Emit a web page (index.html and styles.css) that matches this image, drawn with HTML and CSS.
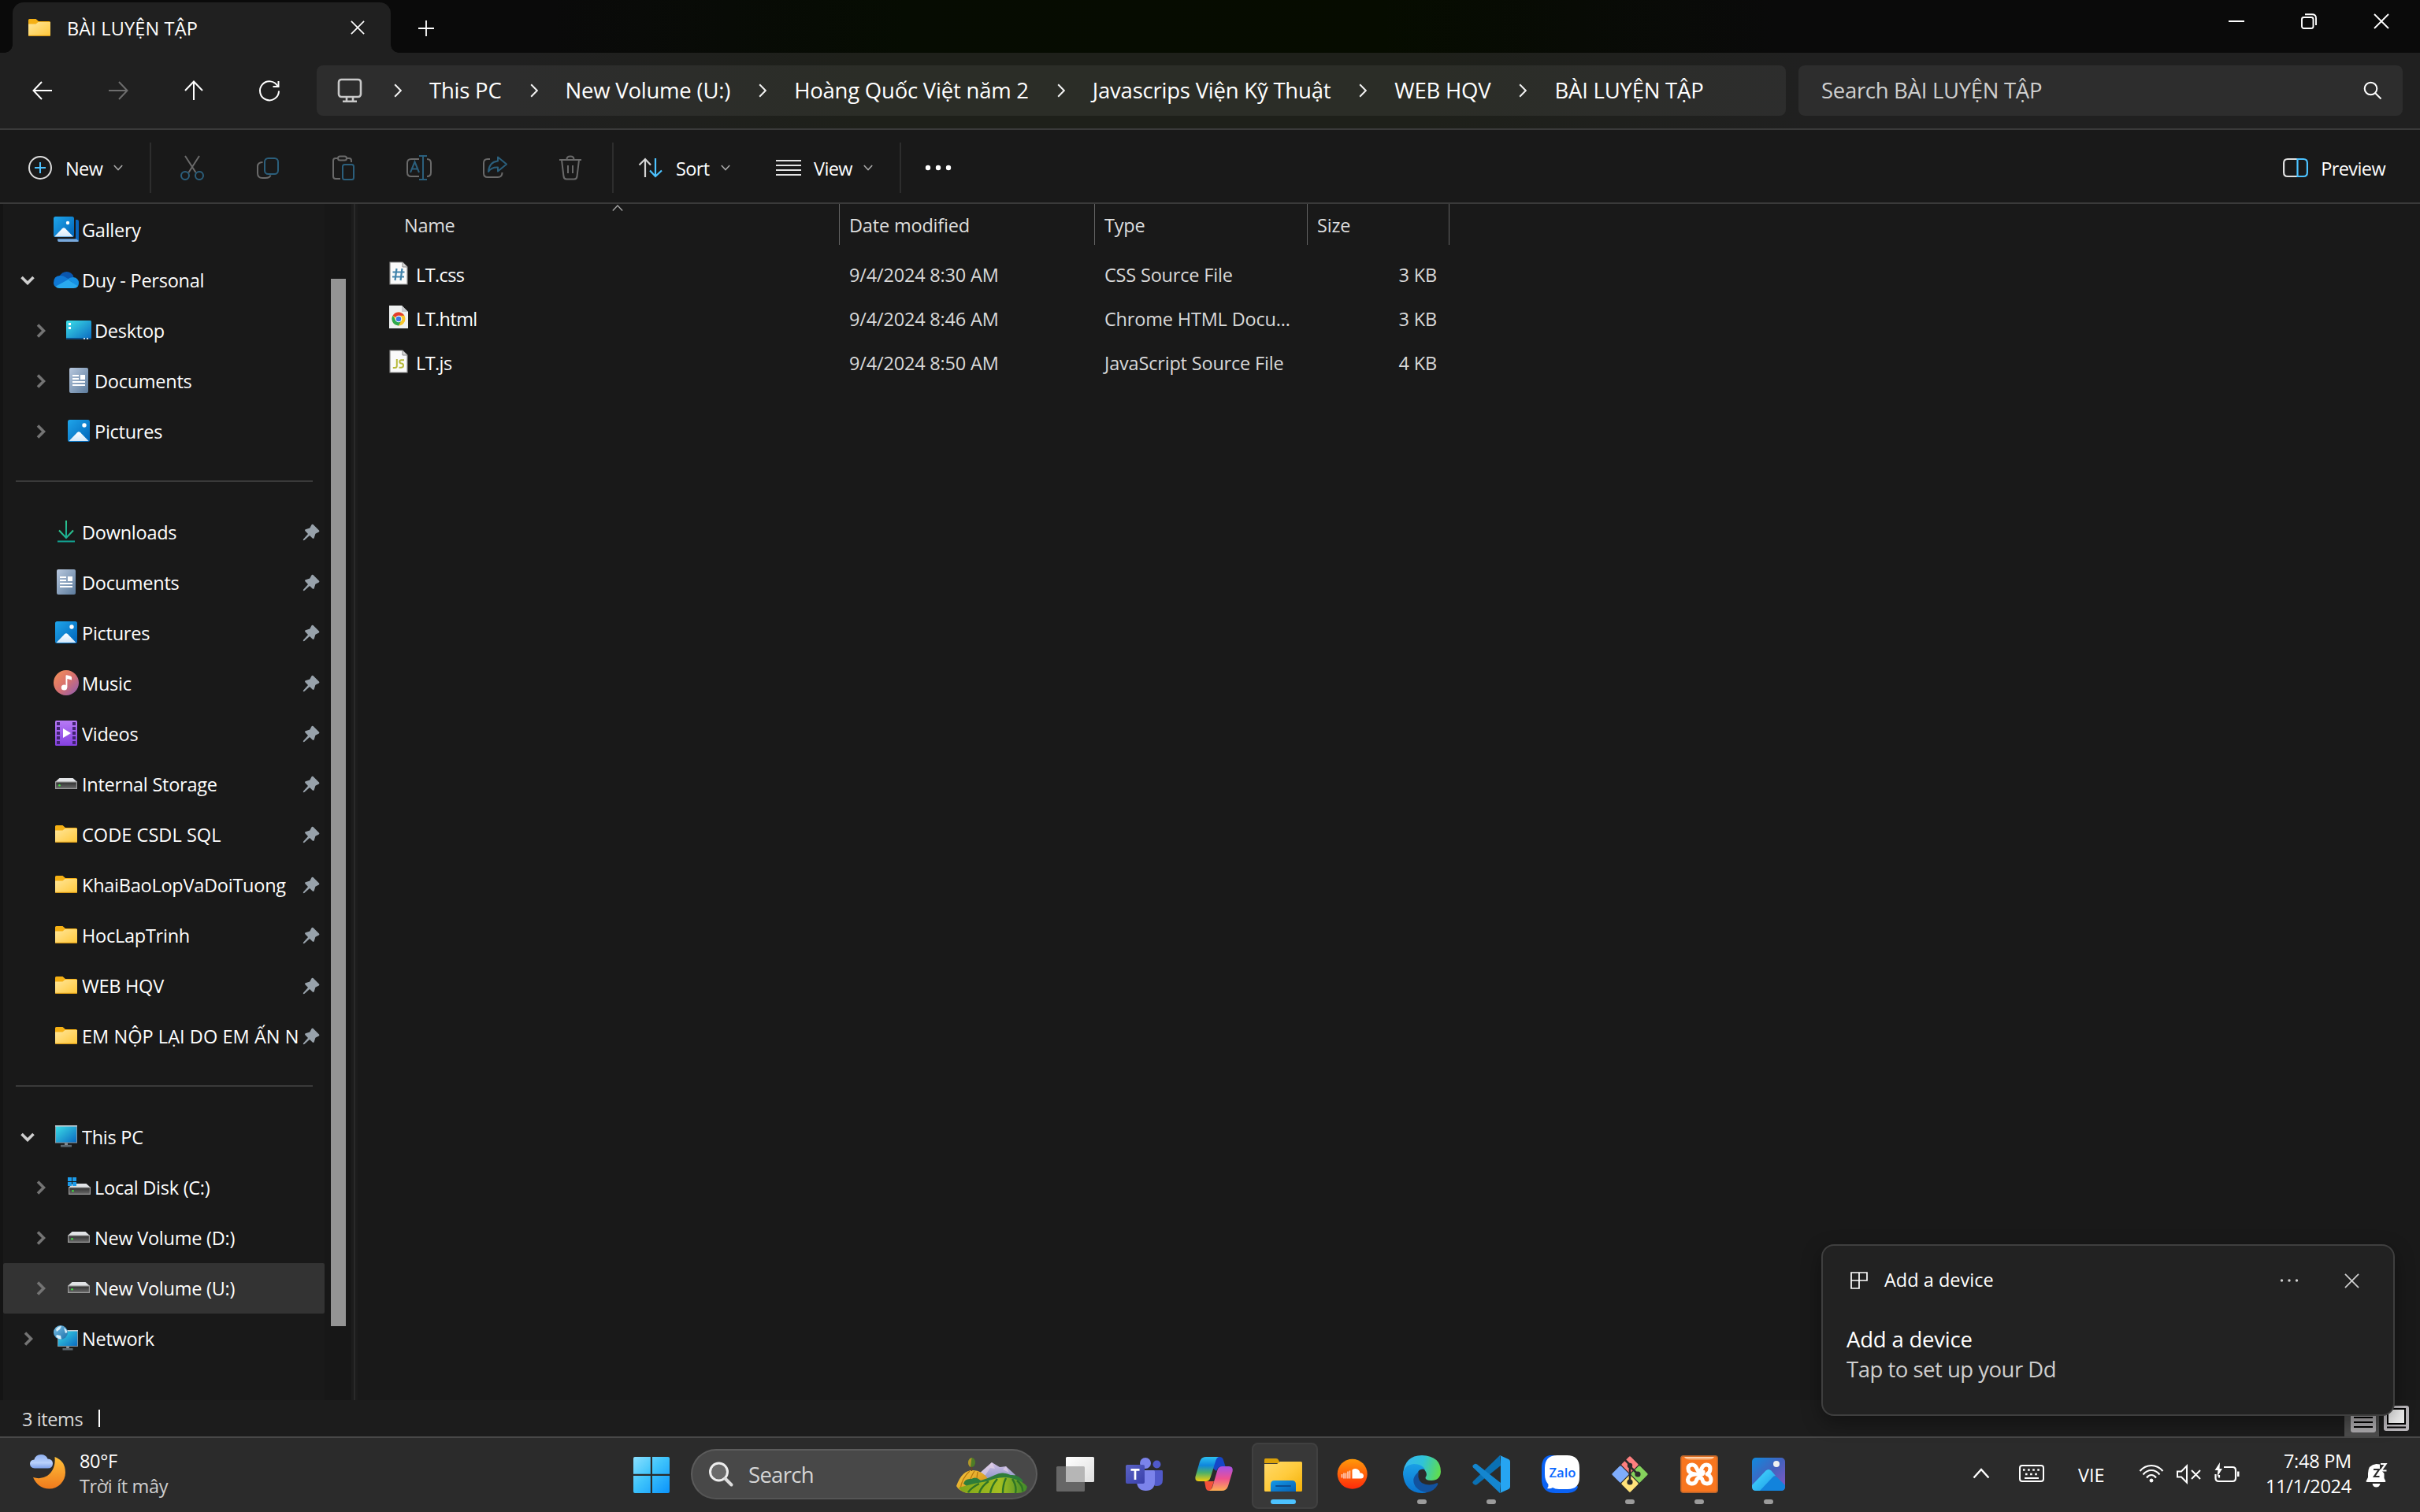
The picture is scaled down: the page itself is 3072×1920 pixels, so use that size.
FILE: index.html
```html
<!DOCTYPE html>
<html lang="vi">
<head>
<meta charset="utf-8">
<title>BÀI LUYỆN TẬP</title>
<link rel="stylesheet" href="styles.css">
</head>
<body>
<svg class="defs" aria-hidden="true">
  <defs>
    <linearGradient id="gFolder" x1="0" y1="0" x2="1" y2="1"><stop offset="0" stop-color="#ffe69a"/><stop offset="1" stop-color="#ffc83a"/></linearGradient>
    <linearGradient id="gPic" x1="0" y1="0" x2="1" y2="1"><stop offset="0" stop-color="#1fa5ea"/><stop offset="1" stop-color="#0063b8"/></linearGradient>
    <linearGradient id="gSnow" x1="0" y1="0" x2="0" y2="1"><stop offset="0" stop-color="#ffffff"/><stop offset="1" stop-color="#d3e8fa"/></linearGradient>
    <linearGradient id="gDesk" x1="0" y1="0" x2="1" y2="1"><stop offset="0" stop-color="#3de0e8"/><stop offset="1" stop-color="#0a68c0"/></linearGradient>
    <linearGradient id="gDoc" x1="0" y1="0" x2="1" y2="1"><stop offset="0" stop-color="#b8c8de"/><stop offset="1" stop-color="#5c7b9c"/></linearGradient>
    <linearGradient id="gMusic" x1="0" y1="0" x2="1" y2="1"><stop offset="0" stop-color="#f59256"/><stop offset=".5" stop-color="#d8716f"/><stop offset="1" stop-color="#8a5bb5"/></linearGradient>
    <linearGradient id="gVideo" x1="0" y1="0" x2="0" y2="1"><stop offset="0" stop-color="#b77af5"/><stop offset="1" stop-color="#8440e0"/></linearGradient>
    <linearGradient id="gDown" x1="0" y1="0" x2="0" y2="1"><stop offset="0" stop-color="#2fc48d"/><stop offset="1" stop-color="#12a594"/></linearGradient>
    <linearGradient id="gDrive" x1="0" y1="0" x2="0" y2="1"><stop offset="0" stop-color="#2f2f2f"/><stop offset="1" stop-color="#6a6a6a"/></linearGradient>
    <linearGradient id="gGlobe" x1="0" y1="0" x2="1" y2="1"><stop offset="0" stop-color="#7cc3ea"/><stop offset="1" stop-color="#1a6ea8"/></linearGradient>

    <symbol id="folder" viewBox="0 0 28 22"><path d="M0 1.5Q0 0 1.500 0H9.500L13 3H26.500Q28 3 28 4.500V10H0Z" fill="#f5b014"/><path d="M0 6.500H9.500L12.500 4H28V20.500Q28 22 26.500 22H1.500Q0 22 0 20.500Z" fill="url(#gFolder)"/><path d="M.5 21.400H27.500" stroke="#d99a17" stroke-width="1.200"/></symbol>
    <symbol id="picture" viewBox="0 0 28 28"><rect width="28" height="28" rx="2.500" fill="url(#gPic)"/><path d="M1.500 27L12 16.200Q14 14.300 16 16.200L26.500 27Z" fill="url(#gSnow)"/><circle cx="21" cy="7" r="2.700" fill="#fff"/></symbol>
    <symbol id="document" viewBox="0 0 24 32"><rect width="24" height="32" rx="2" fill="url(#gDoc)"/><path d="M4 10H12M4 14H12M4 18H20M4 22H20" stroke="#fff" stroke-width="2"/><rect x="14" y="9" width="6" height="6" fill="#fff"/></symbol>
    <symbol id="drive" viewBox="0 0 28 14"><path d="M5.500 0H22.500L28 5H0Z" fill="#e1e3e6"/><rect x=".6" y="5" width="26.800" height="8.400" fill="url(#gDrive)" stroke="#9a9a9a" stroke-width="1.200"/><circle cx="5.500" cy="9.300" r="1.300" fill="#3fe03f"/></symbol>
    <symbol id="monitor" viewBox="0 0 28 28"><rect x=".5" y=".5" width="27" height="21.500" fill="url(#gDesk)" stroke="#8b9aa5"/><path d="M0 .8H28" stroke="#c5cdd4" stroke-width="1.600"/><path d="M12 22.500H16V25H12Z" fill="#8c949b"/><path d="M7 24.800H21V27.500H7Z" fill="#5d6870"/></symbol>
    <symbol id="pin" viewBox="0 0 22 22"><path d="M13.500 1Q12 .2 11.300 1.700L9.300 5.600L3.800 7.300Q2.400 8 3.400 9.300L7 12.900L1 19.700L.8 21.200L2.300 21L9.100 15L12.700 18.600Q14 19.600 14.700 18.200L16.400 12.700L20.800 10.400Q22 9.600 21 8.500Z" fill="#98a2ab"/></symbol>
    <symbol id="chev-right" viewBox="0 0 12 18"><path d="M2 1.500L9.500 9L2 16.500" fill="none" stroke="#747474" stroke-width="3.600"/></symbol>
    <symbol id="chev-down" viewBox="0 0 18 12"><path d="M1.500 2L9 9.500L16.500 2" fill="none" stroke="#cfcfcf" stroke-width="3.600"/></symbol>
    <symbol id="crumb" viewBox="0 0 10 18"><path d="M1.200 1.200L8.800 9L1.200 16.800" fill="none" stroke="#f2f2f2" stroke-width="2"/></symbol>
    <symbol id="caret" viewBox="0 0 12 8"><path d="M.8 1L6 6.500L11.200 1" fill="none" stroke="#a8a8a8" stroke-width="1.600"/></symbol>
    <symbol id="close" viewBox="0 0 20 20"><path d="M1 1L19 19M19 1L1 19" fill="none" stroke="currentColor" stroke-width="1.800"/></symbol>
  </defs>
</svg>

<div class="screen">
  <header class="titlebar">
    <div class="tab">
      <svg class="tab-folder"><use href="#folder"/></svg>
      <span class="tab-title">BÀI LUYỆN TẬP</span>
      <svg class="tab-close"><use href="#close"/></svg>
    </div>
    <svg class="tab-new" viewBox="0 0 20 20"><path d="M10 0V20M0 10H20" stroke="#fff" stroke-width="1.800"/></svg>
    <div class="window-controls">
      <svg viewBox="0 0 20 20"><path d="M0 10H20" stroke="#fff" stroke-width="2"/></svg>
      <svg viewBox="0 0 20 20" fill="none" stroke="#fff" stroke-width="1.900"><rect x="1" y="5" width="14.500" height="14" rx="2.500"/><path d="M5 1.300H14Q19 1.300 19 6.300V15"/></svg>
      <svg><use href="#close"/></svg>
    </div>
  </header>

  <nav class="navbar">
    <div class="nav-buttons">
      <svg viewBox="0 0 28 28"><path d="M26 14H3M13 3L2.500 14L13 25" stroke="#fff"/></svg>
      <svg viewBox="0 0 28 28"><path d="M2 14H25M15 3L25.500 14L15 25" stroke="#6d6d6d"/></svg>
      <svg viewBox="0 0 28 28"><path d="M14 26V3M3 14L14 2.500L25 14" stroke="#fff"/></svg>
      <svg viewBox="0 0 28 28"><path d="M24.500 8.500A12 12 0 1 0 26 14.500M25.500 2V9H18.500" stroke="#fff"/></svg>
    </div>
    <div class="address">
      <svg class="address-pc" viewBox="0 0 32 32" fill="none" stroke="#c9c9c9" stroke-width="2.600"><rect x="2" y="2" width="28" height="22" rx="3.500"/><path d="M12 24V29M20 24V29M7 29.700H25"/></svg>
      <svg class="crumb"><use href="#crumb"/></svg><span>This PC</span>
      <svg class="crumb"><use href="#crumb"/></svg><span>New Volume (U:)</span>
      <svg class="crumb"><use href="#crumb"/></svg><span>Hoàng Quốc Việt năm 2</span>
      <svg class="crumb"><use href="#crumb"/></svg><span>Javascrips Viện Kỹ Thuật</span>
      <svg class="crumb"><use href="#crumb"/></svg><span>WEB HQV</span>
      <svg class="crumb"><use href="#crumb"/></svg><span>BÀI LUYỆN TẬP</span>
    </div>
    <div class="search">
      <span>Search BÀI LUYỆN TẬP</span>
      <svg viewBox="0 0 24 24" fill="none" stroke="#fff" stroke-width="2"><circle cx="9.500" cy="9.500" r="7.800"/><path d="M15 15L22.500 22.500"/></svg>
    </div>
  </nav>

  <div class="toolbar">
    <div class="tool tool-new">
      <svg class="i32" viewBox="0 0 32 32" fill="none" stroke-width="2"><circle cx="16" cy="16" r="14" stroke="#dcdcdc"/><path d="M16 9V23M9 16H23" stroke="#4cc2ff"/></svg>
      <span>New</span><svg class="caret"><use href="#caret"/></svg>
    </div>
    <i class="divider"></i>
    <div class="tool-icons">
      <svg viewBox="0 0 32 32"><path d="M7 1L20.500 22M25 1L11.500 22" stroke="#6a6a6a"/><circle cx="7" cy="26" r="5" stroke="#2b5f7c"/><circle cx="25" cy="26" r="5" stroke="#2b5f7c"/></svg>
      <svg viewBox="0 0 32 32"><path d="M9.500 9Q3 9 3 14.500V23Q3 29 9 29H13Q18.500 29 19.500 25.500" stroke="#6a6a6a"/><rect x="12" y="4" width="17" height="20" rx="4.500" stroke="#2b5f7c"/></svg>
      <svg viewBox="0 0 32 32"><path d="M9 4H6Q3 4 3 7V27Q3 30 6 30H12M20 4H23Q26 4 26 7V9" stroke="#6a6a6a"/><rect x="9" y="1.500" width="11" height="5" rx="2.500" stroke="#6a6a6a"/><rect x="15" y="12" width="14" height="19" rx="2.500" stroke="#2b5f7c"/></svg>
      <svg viewBox="0 0 32 32"><path d="M16 5H6Q1 5 1 10V22Q1 27 6 27H16M26 5Q31 5 31 10V22Q31 27 26 27" stroke="#6a6a6a"/><path d="M5 22L10.500 8.500L16 22M7 17.500H14M21 1V31M16 1H26M16 31H26" stroke="#2b5f7c"/></svg>
      <svg viewBox="0 0 32 32"><path d="M10 5H7Q2 5 2 10V23Q2 28 7 28H20Q25.500 28 25.500 22" stroke="#6a6a6a"/><path d="M20 2.500L31 11.500L20 20.500V15.500Q12 15 8 21Q9 8.500 20 7.500Z" stroke="#2b5f7c" stroke-linejoin="round"/></svg>
      <svg viewBox="0 0 32 32"><path d="M2 6H30M5 6L7.500 27Q8 30.500 11 30.500H21Q24 30.500 24.500 27L27 6M11.500 5.500Q11.500 1.500 16 1.500Q20.500 1.500 20.500 5.500M13 13V23M19 13V23" stroke="#6a6a6a"/></svg>
    </div>
    <i class="divider"></i>
    <div class="tool tool-sort">
      <svg class="i32" viewBox="0 0 32 32" fill="none" stroke-width="2.200"><path d="M9 28V5M1.500 12.500L9 5L16 12.500" stroke="#d5d5d5"/><path d="M22 4V27M15 19.500L22 27L30 19.500" stroke="#4cc2ff"/></svg>
      <span>Sort</span><svg class="caret"><use href="#caret"/></svg>
    </div>
    <div class="tool tool-view">
      <svg class="i32" viewBox="0 0 32 32" stroke="#e3e3e3" stroke-width="2"><path d="M0 7H32M0 13H32M0 19H32M0 25H32"/></svg>
      <span>View</span><svg class="caret"><use href="#caret"/></svg>
    </div>
    <i class="divider"></i>
    <svg class="more" viewBox="0 0 34 8" fill="#fff"><circle cx="4" cy="4" r="3.200"/><circle cx="17" cy="4" r="3.200"/><circle cx="30" cy="4" r="3.200"/></svg>
    <div class="tool tool-preview">
      <svg class="i32" viewBox="0 0 32 32" fill="none" stroke-width="2.200"><path d="M18 5H6Q1.100 5 1.100 10V22Q1.100 27 6 27H18" stroke="#e0e0e0"/><path d="M18.500 5H26Q30.900 5 30.900 10V22Q30.900 27 26 27H18.500Z" stroke="#4cc2ff"/></svg>
      <span>Preview</span>
    </div>
  </div>

  <div class="content">
    <aside class="sidebar">
      <ul class="tree">
        <li><b></b><i><svg width="32" height="32" viewBox="0 0 32 32"><path d="M28 4H30Q32 4 32 6V30Q32 32 30 32H7Q5 32 5 28.500H28Z" fill="#0a66bd"/><path d="M5 28.500H29L32 31Q31.500 32 30 32H7Q5 32 5 28.500Z" fill="#79a9dc"/><rect width="27.500" height="27.500" rx="2.500" fill="#191919"/><rect width="26" height="26" rx="2.500" fill="url(#gPic)"/><path d="M1 25.500L11 15.200Q13 13.500 15 15.200L25 25.500Z" fill="url(#gSnow)"/><circle cx="18" cy="8" r="2.200" fill="#fff"/></svg></i><span>Gallery</span></li>
        <li><b><svg class="cd"><use href="#chev-down"/></svg></b><i><svg width="32" height="21" viewBox="0 0 32 21"><path d="M7 6Q11 0 16.500 0Q23 0 25.500 6.500L16 12Z" fill="#0a56ae"/><path d="M0 14Q0 5.500 8 5Q12 4.500 15 7L22 11L3 19.500Q0 17.500 0 14Z" fill="#0f78d4"/><path d="M18 9.500Q21 6.800 25 7Q32 8 32 14.500Q32 17 30.500 19Z" fill="#1590e2"/><path d="M2.500 18.800L18.500 10L31 18.500Q29 21 25.500 21H7Q4 21 2.500 18.800Z" fill="#29a9ee"/></svg></i><span>Duy - Personal</span></li>
        <li class="sub"><b><svg class="cr"><use href="#chev-right"/></svg></b><i><svg width="32" height="24" viewBox="0 0 32 24"><rect width="32" height="24" rx="1.500" fill="url(#gDesk)"/><path d="M0 22H32V22.500Q32 24 30.500 24H1.500Q0 24 0 22.500Z" fill="#0b4f86"/><path d="M3 3H6V6H3ZM3 8H6V11H3Z" fill="#fff"/><path d="M22 22H24V24H22ZM26 22H28V24H26Z" fill="#c9dcec"/></svg></i><span>Desktop</span></li>
        <li class="sub"><b><svg class="cr"><use href="#chev-right"/></svg></b><i><svg width="24" height="32"><use href="#document"/></svg></i><span>Documents</span></li>
        <li class="sub"><b><svg class="cr"><use href="#chev-right"/></svg></b><i><svg width="28" height="28"><use href="#picture"/></svg></i><span>Pictures</span></li>
        <li class="rule"></li>
        <li><b></b><i><svg width="22" height="28" viewBox="0 0 22 28" fill="none" stroke="url(#gDown)" stroke-width="2"><path d="M10 0H12V22H10Z" fill="url(#gDown)" stroke="none"/><path d="M2 12.500L11 22L20 12.500M0 26.500L22 26.400"/></svg></i><span>Downloads</span><svg class="pin"><use href="#pin"/></svg></li>
        <li><b></b><i><svg width="24" height="32"><use href="#document"/></svg></i><span>Documents</span><svg class="pin"><use href="#pin"/></svg></li>
        <li><b></b><i><svg width="28" height="28"><use href="#picture"/></svg></i><span>Pictures</span><svg class="pin"><use href="#pin"/></svg></li>
        <li><b></b><i><svg width="32" height="32" viewBox="0 0 32 32"><circle cx="16" cy="16" r="16" fill="url(#gMusic)"/><ellipse cx="13.500" cy="22" rx="3.700" ry="3.500" fill="#fff"/><path d="M15.500 22V7Q15.500 6 16.800 6.200L21.500 7.500Q23 8 23 9V12.500L17.400 11V22Z" fill="#fff"/></svg></i><span>Music</span><svg class="pin"><use href="#pin"/></svg></li>
        <li><b></b><i><svg width="28" height="32" viewBox="0 0 28 32"><rect width="28" height="32" rx="1.500" fill="url(#gVideo)"/><path d="M4 2V31M24 2V31" stroke="#40246e" stroke-width="4" stroke-dasharray="4 2"/><path d="M10 10L20 16L10 22Z" fill="#fff"/></svg></i><span>Videos</span><svg class="pin"><use href="#pin"/></svg></li>
        <li><b></b><i><svg width="28" height="14"><use href="#drive"/></svg></i><span>Internal Storage</span><svg class="pin"><use href="#pin"/></svg></li>
        <li class="caps"><b></b><i><svg width="28" height="22"><use href="#folder"/></svg></i><span>CODE CSDL SQL</span><svg class="pin"><use href="#pin"/></svg></li>
        <li><b></b><i><svg width="28" height="22"><use href="#folder"/></svg></i><span>KhaiBaoLopVaDoiTuong</span><svg class="pin"><use href="#pin"/></svg></li>
        <li><b></b><i><svg width="28" height="22"><use href="#folder"/></svg></i><span>HocLapTrinh</span><svg class="pin"><use href="#pin"/></svg></li>
        <li><b></b><i><svg width="28" height="22"><use href="#folder"/></svg></i><span>WEB HQV</span><svg class="pin"><use href="#pin"/></svg></li>
        <li class="caps"><b></b><i><svg width="28" height="22"><use href="#folder"/></svg></i><span>EM NỘP LẠI DO EM ẤN N</span><svg class="pin"><use href="#pin"/></svg></li>
        <li class="rule"></li>
        <li><b><svg class="cd"><use href="#chev-down"/></svg></b><i><svg width="28" height="28"><use href="#monitor"/></svg></i><span>This PC</span></li>
        <li class="sub"><b><svg class="cr"><use href="#chev-right"/></svg></b><i><svg width="30" height="32" viewBox="0 0 30 32"><svg x="2" y="12" width="28" height="14"><use href="#drive"/></svg><path d="M1 4H6V9H1ZM7 4H12V9H7ZM1 10H6V15H1ZM7 10H12V15H7Z" fill="#1c9bea"/></svg></i><span>Local Disk (C:)</span></li>
        <li class="sub"><b><svg class="cr"><use href="#chev-right"/></svg></b><i><svg width="28" height="14"><use href="#drive"/></svg></i><span>New Volume (D:)</span></li>
        <li class="sub selected"><b><svg class="cr"><use href="#chev-right"/></svg></b><i><svg width="28" height="14"><use href="#drive"/></svg></i><span>New Volume (U:)</span></li>
        <li><b><svg class="cr"><use href="#chev-right"/></svg></b><i><svg width="32" height="32" viewBox="0 0 32 32"><svg x="4" y="6" width="28" height="26"><use href="#monitor"/></svg><circle cx="9" cy="9" r="9" fill="url(#gGlobe)"/><path d="M3 5Q6 1 10 1L8 5L4 8ZM13 3Q17 5 17.500 9L15 10ZM4 12L9 13L10 17.500Q6 18 3 14Z" fill="#d7eefa"/></svg></i><span>Network</span></li>
      </ul>
      <div class="scroll"><div class="thumb"></div></div>
    </aside>
    <div class="splitter"></div>
    <main class="files">
      <div class="row head">
        <span>Name<svg class="sorted" viewBox="0 0 14 8"><path d="M.8 7.500L7 1L13.200 7.500" fill="none" stroke="#a8a8a8" stroke-width="1.300"/></svg></span><span>Date modified</span><span>Type</span><span>Size</span>
      </div>
      <div class="row">
        <span><svg class="file" viewBox="0 0 24 30"><path d="M1 1H17L23 7V29H1Z" fill="#fafafa" stroke="#8b8b8b" stroke-width="1.200"/><path d="M17 1V7H23" fill="#d8d8d8" stroke="#8b8b8b"/><path d="M9.500 9L7.500 24M16.500 9L14.500 24M4.500 13.500H19.500M4 19.500H19" stroke="#4083ab" stroke-width="2.200"/></svg>LT.css</span>
        <span>9/4/2024 8:30 AM</span><span>CSS Source File</span><span>3 KB</span>
      </div>
      <div class="row">
        <span><svg class="file" viewBox="0 0 24 30"><path d="M0 0H16L24 8V29H0Z" fill="#eef0f1"/><path d="M16 0V8H24Z" fill="#c6c9cc"/><circle cx="12" cy="17" r="8.500" fill="#f7c52b"/><path d="M4.600 12.800A8.500 8.500 0 0 1 19.400 12.800H12V17Z" fill="#e33b2e"/><path d="M4.600 12.800A8.500 8.500 0 0 0 12 25.500L15.500 19L12 17L8.500 19Z" fill="#2da94f"/><circle cx="12" cy="17" r="4.300" fill="#fff"/><circle cx="12" cy="17" r="3.300" fill="#3b78e7"/></svg>LT.html</span>
        <span>9/4/2024 8:46 AM</span><span>Chrome HTML Docu...</span><span>3 KB</span>
      </div>
      <div class="row">
        <span><svg class="file" viewBox="0 0 24 30"><path d="M1 1H17L23 7V29H1Z" fill="#fafafa" stroke="#8b8b8b" stroke-width="1.200"/><path d="M17 1V7H23" fill="#d8d8d8" stroke="#8b8b8b"/><path d="M9.800 12V20.500Q9.800 23 7.300 23H4.800M19 13.200H15.500Q13.300 13.200 13.300 15.300Q13.300 17.400 15.500 17.500Q18 17.600 18 20Q18 22.500 15.500 22.700H12.500" fill="none" stroke="#b7b93a" stroke-width="2"/></svg>LT.js</span>
        <span>9/4/2024 8:50 AM</span><span>JavaScript Source File</span><span>4 KB</span>
      </div>
    </main>
  </div>

  <footer class="status">
    <span>3 items</span><i></i>
    <div class="views">
      <div class="view-details"><svg viewBox="0 0 32 32"><rect width="32" height="32" rx="3" fill="#aaa8ab"/><path d="M4 7H28M4 13H28M4 19H28M4 25H28" stroke="#000" stroke-width="2"/></svg></div>
      <svg class="view-large" viewBox="0 0 32 32"><rect width="32" height="32" rx="3" fill="#b9b6ba"/><rect x="5" y="4" width="22" height="19" fill="#eee" stroke="#000" stroke-width="2"/><path d="M4 27.500H28" stroke="#000" stroke-width="2"/></svg>
    </div>
  </footer>

  <div class="taskbar">
    <div class="weather">
      <svg viewBox="0 0 46 46"><defs><linearGradient id="gMoon" x1="0" y1="0" x2="0" y2="1"><stop offset="0" stop-color="#ffc13a"/><stop offset="1" stop-color="#f07a1c"/></linearGradient><linearGradient id="gCloud" x1="0" y1="0" x2="0" y2="1"><stop offset="0" stop-color="#8fb0f0"/><stop offset=".6" stop-color="#b9d0fb"/><stop offset="1" stop-color="#7d9fe8"/></linearGradient></defs><path d="M31.500 4Q45 9 45 24A20.500 20.500 0 0 1 24.500 44.500Q10 44 4 30Q14 33 22 28Q33 20 31.500 4Z" fill="url(#gMoon)"/><path d="M6 18.500Q0 18 0 12.800Q0 8 5.500 7.500Q7 1 14 1Q20.500 1 22.500 6.500Q29 7 29 12.500Q29 18.500 22.500 18.500Z" fill="url(#gCloud)"/></svg>
      <div><p>80°F</p><p class="dim">Trời ít mây</p></div>
    </div>

    <div class="apps">
      <div class="app start"><svg viewBox="0 0 48 48"><defs><linearGradient id="gWin" x1="0" y1="0" x2="1" y2="1"><stop offset="0" stop-color="#8be0ff"/><stop offset=".45" stop-color="#3fc4fb"/><stop offset="1" stop-color="#0a93fb"/></linearGradient></defs><path d="M1 3Q1 1 3 1H22.800V22.800H1ZM25 1H45Q47 1 47 3V22.800H25ZM1 25H22.800V47H3Q1 47 1 45ZM25 25H47V45Q47 47 45 47H25Z" fill="url(#gWin)"/></svg></div>

      <div class="task-search">
        <svg class="lens" viewBox="0 0 32 32" fill="none"><circle cx="13.500" cy="13" r="11" fill="#6a6a6a" stroke="#eee" stroke-width="3"/><path d="M21.500 21.500L29.500 29.500" stroke="#ddd" stroke-width="4" stroke-linecap="round"/></svg>
        <span>Search</span>
        <svg class="scene" viewBox="0 0 92 46">
          <defs><linearGradient id="gMount" x1="0" y1="0" x2="0" y2="1"><stop offset="0" stop-color="#d2bfe6"/><stop offset="1" stop-color="#7f8fc0"/></linearGradient><linearGradient id="gGold" x1="0" y1="0" x2="1" y2="1"><stop offset="0" stop-color="#f9c93f"/><stop offset="1" stop-color="#c98613"/></linearGradient><linearGradient id="gHill" x1="0" y1="0" x2="1" y2="0"><stop offset="0" stop-color="#7ea51a"/><stop offset=".6" stop-color="#a4bf21"/><stop offset="1" stop-color="#3f8a2a"/></linearGradient></defs>
          <path d="M28 22L46 6L56 12L64 11L76 22L70 32H30Z" fill="url(#gMount)"/><path d="M46 6L50 14L44 13L38 22L28 22ZM64 11L68 19L60 15Z" fill="#e8d5e8" opacity=".6"/>
          <path d="M1 36Q8 16 22 16Q34 16 42 28L14 45Q4 42 1 36Z" fill="url(#gGold)"/><path d="M18 17Q8 26 6 40M24 17Q18 26 16 38M28 18Q27 26 26 34" stroke="#b5790f" stroke-width="1.300" fill="none"/>
          <path d="M20.500 17V8" stroke="#6b4420" stroke-width="1.400"/><ellipse cx="20.500" cy="6" rx="4.600" ry="6" fill="#4f7d27"/><path d="M20.500 0Q16 2 16 6Q16 10 19 12Z" fill="#b4952b"/>
          <path d="M10 33Q12 26 20 27Q26 23 32 29Q42 26 50 22Q60 17 70 22Q80 21 86 30L70 36H14Z" fill="#2e7d3a"/>
          <path d="M4 38Q26 32 40 30Q60 22 74 27Q86 30 91 37Q90 45 78 45H18Q8 45 4 38Z" fill="url(#gHill)"/>
          <path d="M30 33Q20 38 16 44M42 30Q33 36 30 45M53 27Q46 35 44 45M64 26Q60 34 60 45M72 27Q78 36 76 45M78 29Q86 36 85 43" stroke="#2f7426" stroke-width="2.400" fill="none"/>
        </svg>
      </div>

      <div class="app"><svg viewBox="0 0 48 48"><defs><linearGradient id="gTv" x1="0" y1="0" x2="1" y2="1"><stop offset="0" stop-color="#fff"/><stop offset="1" stop-color="#dedede"/></linearGradient></defs><rect y="14" width="36" height="32" rx="1.500" fill="#666"/><rect x="12" y="2" width="36" height="32" rx="1.500" fill="url(#gTv)"/><path d="M12 14H34.500Q36 14 36 15.500V34H13.500Q12 34 12 32.500Z" fill="#b6b6b6"/></svg></div>
      <div class="app"><svg viewBox="0 0 48 48"><defs><linearGradient id="gT" x1="0" y1="0" x2="1" y2="1"><stop offset="0" stop-color="#5a62c3"/><stop offset="1" stop-color="#3940ab"/></linearGradient></defs><circle cx="39.500" cy="11.500" r="5" fill="#5059c9"/><path d="M34 19H46Q47 19 47 20.500V31Q47 39 39.500 39Q34 39 34 34Z" fill="#5059c9"/><circle cx="25" cy="10" r="7" fill="#7b83eb"/><path d="M16 19H35.500Q37 19 37 20.500V33Q37 45 25.500 45Q15 45 14 34Z" fill="#7b83eb"/><rect y="12" width="24" height="24" rx="2" fill="url(#gT)"/><path d="M6.500 18.400H17.500M12 18.400V31" stroke="#fff" stroke-width="2.700"/></svg></div>
      <div class="app"><svg viewBox="0 0 48 48"><defs><linearGradient id="gCo1" x1="0" y1="0" x2="0" y2="1"><stop offset="0" stop-color="#2cc0f0"/><stop offset=".35" stop-color="#0f86dd"/><stop offset=".65" stop-color="#4bb06a"/><stop offset="1" stop-color="#f3ce0c"/></linearGradient><linearGradient id="gCo2" x1="0" y1="0" x2="0" y2="1"><stop offset="0" stop-color="#a551e8"/><stop offset=".5" stop-color="#ee5190"/><stop offset="1" stop-color="#fdae52"/></linearGradient></defs><path d="M26 2H31Q35 2 36 6L38.500 14H34Q29 14 27 20L21 15Z" fill="#1546c8"/><path d="M12 33H24L20 45H17.500Q14.500 45 13.500 41Z" fill="#f4513a"/><path d="M14 2H30Q27.500 3 26.500 6L19.500 28.500Q18 33 13.500 33H5Q-.5 33 .5 27L6 8Q8 2 14 2Z" fill="url(#gCo1)"/><path d="M34.500 14H43Q48.500 14 47.700 20L42 39Q40 45 34 45H18Q21 44 22 40.500L28.500 18.500Q30 14 34.500 14Z" fill="url(#gCo2)"/></svg></div>
      <div class="app active"><svg viewBox="0 0 48 48"><defs><linearGradient id="gEx" x1="0" y1="0" x2="1" y2="1"><stop offset="0" stop-color="#ffd96a"/><stop offset=".5" stop-color="#ffcb3d"/><stop offset="1" stop-color="#f3b007"/></linearGradient><linearGradient id="gExb" x1="0" y1="0" x2="1" y2="1"><stop offset="0" stop-color="#159ae8"/><stop offset="1" stop-color="#0560b4"/></linearGradient></defs><path d="M0 5.500Q0 4 1.500 4H15Q17 4 18 6L20 10H0Z" fill="#dba108"/><path d="M0 11H16L20 8H46.500Q48 8 48 9.500V44.500Q48 46 46.500 46H1.500Q0 46 0 44.500Z" fill="url(#gEx)"/><path d="M8 46V37Q8 32 13 32H35Q40 32 40 37V46Z" fill="url(#gExb)"/><path d="M15 39H33" stroke="#0a4f94" stroke-width="2" stroke-linecap="round"/></svg><u class="wide"></u></div>
      <div class="app"><svg viewBox="0 0 48 48"><defs><linearGradient id="gSc" x1="0" y1="0" x2="0" y2="1"><stop offset="0" stop-color="#ff9a0a"/><stop offset="1" stop-color="#ff2a0a"/></linearGradient></defs><circle cx="23.700" cy="23.700" r="19" fill="url(#gSc)"/><path d="M23.500 29.500V18.500Q26 16.500 29 17.200Q33 18.500 33.500 22.500Q37.500 22 38 26Q38 29.500 34.500 29.500Z" fill="#fff"/><path d="M10.500 24V28.500M13 22.500V29.500M15.500 22.500V29.500M18 20.500V29.500M20.500 19.500V29.500" stroke="#ffd9cc" stroke-width="1.500"/></svg></div>
      <div class="app"><svg viewBox="0 0 48 48"><defs><linearGradient id="gE1" x1="0" y1=".3" x2="1" y2=".5"><stop offset="0" stop-color="#35b5f1"/><stop offset=".5" stop-color="#2fc3d8"/><stop offset="1" stop-color="#5fdc4f"/></linearGradient><linearGradient id="gE2" x1="0" y1="0" x2="0" y2="1"><stop offset="0" stop-color="#1a9fe6"/><stop offset="1" stop-color="#0a73cf"/></linearGradient></defs><path d="M0 24Q2 0 24 0Q48 1 48 21Q47 32 36 32Q28 32 28.500 28Q31 25 29 21Q25 12 14 12Q3 13 0 24Z" fill="url(#gE1)"/><path d="M0 24Q1 12 14 11Q24 11 28 18Q20 16 18 24Q15 40 32 46.500Q28 48 24 48Q2 47 0 24Z" fill="url(#gE2)"/><path d="M20 21Q17 34 29 37Q37 38.500 43.500 35Q45 35.500 44 37.500Q40 45 31 47Q22 47 16 40Q9 29 20 21Z" fill="#12529e"/></svg><u></u></div>
      <div class="app"><svg viewBox="0 0 48 48"><path d="M35 0L1 33Q-.5 34.500 1 36L3 37.500Q4.500 38 6 37L36 13Z" fill="#0a70b3"/><path d="M35 48L1 15.500Q-.5 14 1 12.500L3 11Q4.500 10.500 6 11.500L36 35Z" fill="#1486cf"/><path d="M35 0L46 5Q48 6 48 8V40Q48 42 46 43L35 48Q36 47 36 45V3Q36 1 35 0Z" fill="#26a5f2"/></svg><u></u></div>
      <div class="app"><svg viewBox="0 0 48 48"><path d="M16 0H10Q0 2 0 16V30Q0 48 18 48H30Q44 48 46 40Z" fill="#0a62f5"/><path d="M20 0H32Q48 0 48 16V28Q48 43 33 43H22Q17 43 14 41Q11 43 7 42Q9 40 8.500 37Q4 32 4 24V16Q4 0 20 0Z" fill="#fff"/><text x="9.500" y="27.800" class="zalo" textLength="34" lengthAdjust="spacingAndGlyphs">Zalo</text></svg></div>
      <div class="app"><svg viewBox="0 0 48 48"><g stroke="#2b2b2b" stroke-width="1"><rect x="15.500" y="3.500" width="17" height="17" rx="2" transform="rotate(45 24 12)" fill="#fd7f7f"/><rect x="3.500" y="15.500" width="17" height="17" rx="2" transform="rotate(45 12 24)" fill="#7fadfd"/><rect x="27.500" y="15.500" width="17" height="17" rx="2" transform="rotate(45 36 24)" fill="#85d35c"/><rect x="15.500" y="27.500" width="17" height="17" rx="2" transform="rotate(45 24 36)" fill="#ffe27a"/></g><path d="M17 5L24 12V34M24 14L34 24" stroke="#2b2b2b" stroke-width="2.600" fill="none"/><circle cx="24" cy="13" r="3.200" fill="#2b2b2b"/><circle cx="34" cy="24" r="3.600" fill="#2b2b2b"/><circle cx="24" cy="34" r="3.600" fill="#2b2b2b"/></svg><u></u></div>
      <div class="app"><svg viewBox="0 0 48 48"><defs><linearGradient id="gXs" x1="0" y1="0" x2="0" y2="1"><stop offset="0" stop-color="#ffe2c8"/><stop offset="1" stop-color="#f78a3a"/></linearGradient></defs><rect x=".7" y=".7" width="46.600" height="46.600" rx="3" fill="#f8761f" stroke="#b3632c" stroke-width="1.400"/><path d="M5 2H43Q41 6 34 6H14Q7 6 5 2Z" fill="url(#gXs)"/><path d="M19 24Q10 23 10 17Q10 12 15 12Q19 12 21 17Q22 20 24 20Q26 20 27 17Q29 12 33 12Q38 12 38 17Q38 22 34 24Q39 26 39 31Q39 36 34 36Q29 36 28 31Q27 28 24 28.500Q21 29 20 33Q18 36.500 14 36Q9.500 35 9.500 31Q10 25 19 24H27Q29 24 29 21" fill="none" stroke="#fff" stroke-width="5" stroke-linejoin="round" stroke-linecap="round"/></svg><u></u></div>
      <div class="app"><svg viewBox="0 0 48 48"><defs><linearGradient id="gPh" x1="0" y1="0" x2="1" y2="1"><stop offset="0" stop-color="#108ade"/><stop offset=".5" stop-color="#4561bd"/><stop offset="1" stop-color="#8a56c4"/></linearGradient><linearGradient id="gPh2" x1="0" y1="0" x2="1" y2="1"><stop offset="0" stop-color="#4adcff"/><stop offset="1" stop-color="#1a9be8"/></linearGradient></defs><rect x="3" y="3" width="42" height="42" rx="5" fill="url(#gPh)"/><path d="M12 45L29 28Q32 25.500 35 28L45 38V40Q45 45 40 45Z" fill="#1283dc"/><path d="M3 38L20.500 19.500Q24 16.500 27.500 19.500L33 26Q30.500 26 29 28L13 45H8Q3 45 3 40Z" fill="url(#gPh2)"/><circle cx="34" cy="11" r="4" fill="#f1f1f1"/></svg><u></u></div>
    </div>

    <div class="tray">
      <svg class="up" viewBox="0 0 22 14"><path d="M1.500 12.500L11 2L20.500 12.500" fill="none" stroke="#fff" stroke-width="2.400"/></svg>
      <svg class="keyboard" viewBox="0 0 32 24" fill="none" stroke="#fff" stroke-width="2"><rect x="1" y="2" width="30" height="20" rx="3"/><path d="M5 7.500H27M8 13H24" stroke-width="2.600" stroke-dasharray="2.600 3.500"/><path d="M7 18H25"/></svg>
      <span class="lang">VIE</span>
      <svg class="wifi" viewBox="0 0 32 26" fill="none" stroke="#fff" stroke-width="2.200"><path d="M1.500 10Q7.500 3 16 3Q24.500 3 30.500 10M5.500 14.500Q10 9 16 9Q22 9 26.500 14.500M10 18.500Q12.500 15 16 15Q19.500 15 22 18.500"/><circle cx="16" cy="22" r="2" fill="#fff" stroke-width="1"/></svg>
      <svg class="speaker" viewBox="0 0 32 26" fill="none" stroke="#fff" stroke-width="2"><path d="M1 9.500H6L13 2.500V23.500L6 16.500H1ZM19 8L30 19M30 8L19 19"/></svg>
      <svg class="battery" viewBox="0 0 32 26" fill="none" stroke="#fff" stroke-width="2.200"><path d="M1.500 15V20Q1.500 24 5.500 24H23Q27 24 27 20V10Q27 6 23 6H12"/><path d="M29 11.500H31.500V18H29Z" fill="#fff" stroke="none"/><path d="M7 0L.5 10H4.500L3.500 18.500L10 8H6.500Z" fill="#fff" stroke="none"/><path d="M6 16V19.500"/></svg>
      <div class="clock"><p>7:48 PM</p><p>11/1/2024</p></div>
      <svg class="bell" viewBox="0 0 28 32"><path d="M13.500 2Q3 3 3 14V19L.5 24Q.5 25 2 25H24.500Q26 25 25 23L23.500 20V14L18 8V2.500Z" fill="#fff"/><path d="M8.500 27H18.500Q17.500 31.500 13.500 31.500Q9.500 31.500 8.500 27Z" fill="#fff"/><path d="M10 9H17L11 18H17.500" fill="none" stroke="#2b2b2b" stroke-width="2.200"/><path d="M19 2H25.500L19.500 10.500H26.500" fill="none" stroke="#fff" stroke-width="2.200"/></svg>
    </div>
  </div>

  <section class="toast">
    <div class="toast-head">
      <svg class="toast-app" viewBox="0 0 22 22" fill="none" stroke="#fff" stroke-width="1.700"><path d="M1 1H21V11H1ZM11 1V21H1V11"/></svg>
      <span>Add a device</span>
      <svg class="toast-more" viewBox="0 0 24 4" fill="#cfcfcf"><circle cx="2.500" cy="2" r="1.700"/><circle cx="12" cy="2" r="1.700"/><circle cx="21.500" cy="2" r="1.700"/></svg>
      <svg class="toast-close"><use href="#close"/></svg>
    </div>
    <p>Add a device</p>
    <p class="dim">Tap to set up your Dd</p>
  </section>
</div>
</body>
</html>
```
FILE: styles.css
```css
* { box-sizing: border-box; margin: 0; padding: 0; }
html, body { width: 3072px; height: 1920px; overflow: hidden; background: #191919; }
body { font-family: "Open Sans", "Noto Sans", sans-serif; font-size: 23.5px; color: #fff; }
svg { display: block; flex: none; overflow: visible; }
span, p { white-space: pre; }
.defs { position: absolute; width: 0; height: 0; }
.screen { position: relative; display: flex; flex-direction: column; width: 3072px; height: 1920px; }

.titlebar { display: flex; height: 67px; background: linear-gradient(90deg, #0a0a0a 700px, #060c02 1150px, #060c00 1750px, #0a0a0a 2250px); }
.tab { position: relative; display: flex; align-items: center; width: 480px; height: 64px; margin: 3px 0 0 16px; padding: 0 33px 0 20px; background: #202020; border-radius: 14px 14px 0 0; }
.tab::before, .tab::after { content: ""; position: absolute; bottom: 0; width: 10px; height: 10px; }
.tab::before { left: -10px; background: radial-gradient(circle at 0 0, transparent 9.5px, #202020 10px); }
.tab::after { right: -10px; background: radial-gradient(circle at 100% 0, transparent 9.5px, #202020 10px); }
.tab-folder { width: 28px; height: 22px; }
.tab-title { margin-left: 21px; padding-top: 2px; font-weight: 500; letter-spacing: .15px; }
.tab-close { width: 18px; height: 18px; margin-left: auto; }
.tab-new { width: 20px; height: 20px; margin: 26px 0 0 35px; }
.window-controls { display: flex; gap: 72px; margin: 17px 39px 0 auto; }
.window-controls svg { width: 20px; height: 20px; }

.navbar { display: flex; align-items: center; height: 98px; padding-right: 22px; border-bottom: 2px solid #3a3a3a; background: linear-gradient(90deg, #202020 650px, #1e201a 1100px, #1e201a 1800px, #202020 2300px); }
.nav-buttons { display: flex; gap: 68px; width: 402px; padding-left: 40px; }
.nav-buttons svg { width: 28px; height: 28px; fill: none; stroke-width: 2; }
.address { display: flex; align-items: center; width: 1865px; height: 64px; padding-left: 26px; border-radius: 8px; background: rgba(255, 255, 255, .06); font-size: 27.5px; letter-spacing: -.22px; }
.address span, .search span { padding-bottom: 1px; }
.address-pc { width: 32px; height: 32px; margin-right: 4px; }
.crumb { width: 10px; height: 18px; margin: 0 35px 0 36px; }
.search { display: flex; align-items: center; justify-content: space-between; width: 767px; height: 64px; margin-left: 16px; padding: 0 26px 0 29px; border-radius: 8px; background: #2d2d2d; color: #cfcfcf; font-size: 27.5px; letter-spacing: -.3px; }
.search svg { width: 24px; height: 24px; }

.toolbar { display: flex; align-items: center; height: 94px; padding: 3px 44px 0 35px; border-bottom: 2px solid #3a3a3a; }
.tool { display: flex; align-items: center; }
.i32 { width: 32px; height: 32px; }
.tool span { margin-left: 16px; line-height: 30px; padding-top: 2px; letter-spacing: -.6px; }
.caret { width: 12px; height: 8px; }
.divider { width: 2px; height: 64px; background: #2d2d2d; }
.tool-icons { display: flex; gap: 64px; }
.tool-icons svg { width: 32px; height: 32px; fill: none; stroke-width: 2; }
.more { width: 34px; height: 8px; margin-left: 30px; }
.tool-new { width: 155px; }
.tool-new .caret, .tool-sort .caret, .tool-view .caret { margin-left: 14px; }
.tool-icons { width: 585px; padding-left: 36px; }
.tool-sort { width: 206px; padding-left: 31px; }
.tool-view { width: 157px; }
.tool-preview { margin-left: auto; }

.content { display: flex; height: 1519px; }
.sidebar { display: flex; width: 446px; border-left: 4px solid #141414; }
.tree { width: 408px; padding-top: 1px; list-style: none; letter-spacing: -.25px; }
.tree li { display: flex; align-items: center; height: 64px; }
.tree .caps { letter-spacing: .05px; }
.tree b { display: flex; justify-content: center; width: 64px; flex: none; }
.tree i { display: flex; justify-content: center; width: 32px; height: 34px; align-items: center; flex: none; margin-bottom: 2px; }
.tree span { flex: 1; margin-left: 4px; line-height: 60px; overflow: hidden; }
.tree .sub { padding-left: 16px; }
.tree .selected { background: #333; border-radius: 2px; }
.tree .rule::before { content: ""; width: 377px; height: 2px; margin: 0 0 2px 16px; background: #3a3a3a; }
.cd { width: 18px; height: 12px; margin-right: 2px; }
.cr { width: 12px; height: 18px; }
.pin { width: 22px; height: 22px; margin: 0 6px 0 2px; }
.scroll { width: 34px; padding: 95px 7px 0 8px; background: #171717; }
.thumb { width: 19px; height: 1330px; background: #949494; }
.splitter { width: 8px; border: solid #1c1c1c; border-width: 0 3px; background: #2a2a2a; }

.files { flex: 1; }
.row { display: grid; grid-template-columns: 612px 324px 270px 180px; align-items: center; height: 56px; color: #d9d9d9; letter-spacing: -.18px; }
.row span { display: flex; align-items: center; height: 56px; padding: 4px 0 0 12px; }
.row span:nth-child(1) { padding-left: 40px; color: #fff; letter-spacing: -.6px; }
.row span:nth-child(4) { justify-content: flex-end; padding-right: 16px; }
.file { width: 24px; height: 30px; margin: -4px 10px 0 0; }
.head { height: 60px; }
.head span, .head span:nth-child(n) { position: relative; align-items: flex-start; justify-content: flex-start; height: 52px; margin-bottom: 8px; padding-top: 11px; border-right: 1px solid #636363; color: #dedede; }
.head span:nth-child(1) { padding-left: 59px; letter-spacing: -.3px; }
.sorted { position: absolute; left: 323px; top: 1px; width: 14px; height: 8px; }

.status { display: flex; align-items: center; height: 48px; padding-left: 28px; border-bottom: 2px solid #484848; background: #1c1c1c; color: #dadada; letter-spacing: -.4px; }
.status > span { padding-top: 2px; }
.status > i { width: 2px; height: 22px; margin-left: 20px; background: #fff; }
.views { display: flex; margin: 0 14px 0 auto; gap: 6px; height: 46px; }
.view-details { display: flex; width: 44px; height: 46px; padding: 9px 0 0 8px; background: #4c4c4c; }
.views svg { width: 32px; height: 32px; }
.view-large { margin-top: 7px; }

.taskbar { display: flex; height: 94px; background: #2b2b2b; }
.weather { display: flex; width: 783px; padding: 20px 0 0 38px; letter-spacing: -.35px; }
.weather svg { width: 46px; height: 46px; margin-right: 17px; }
.weather p { line-height: 32px; margin-top: -7px; margin-bottom: 7px; }
.dim { color: #cfcfcf; }
.apps { display: flex; width: 1506px; }
.app { position: relative; display: flex; justify-content: center; width: 88px; padding-top: 22px; }
.start { padding-top: 23px; }
.app svg { position: relative; width: 48px; height: 48px; }
.active::before { content: ""; position: absolute; left: 4px; top: 6px; width: 80px; height: 80px; border: 2px solid #404040; border-radius: 8px; background: #383838; }
.app u { position: absolute; left: 38px; top: 78px; width: 12px; height: 6px; border-radius: 3px; background: #9b9b9b; }
.app u.wide { left: 28px; width: 32px; background: #4cc2ff; }
.zalo { font: 600 17px "Open Sans", sans-serif; fill: #0a68ff; }
.task-search { display: flex; align-items: center; width: 440px; height: 64px; margin: 14px 4px 0 6px; padding: 0 10px 0 20px; border: 2px solid #5c5c5c; border-bottom-color: #555; border-radius: 32px; background: #484848; color: #d6d6d6; font-size: 27.5px; letter-spacing: -.7px; }
.lens { width: 32px; height: 32px; }
.task-search span { margin-left: 19px; }
.scene { width: 92px; height: 46px; margin: 8px 0 4px auto; }

.tray { display: flex; flex: 1; padding-left: 215px; }
.tray svg { flex: none; }
.up { width: 22px; height: 14px; margin: 38px 37px 0 0; }
.keyboard { width: 32px; height: 24px; margin: 33px 43px 0 0; }
.lang { width: 34px; margin: 31px 43px 0 0; }
.wifi { width: 32px; height: 26px; margin: 32px 16px 0 0; }
.speaker { width: 32px; height: 26px; margin: 33px 16px 0 0; }
.battery { width: 32px; height: 26px; margin: 31px 0 0; }
.clock { width: 142px; padding-top: 13px; text-align: right; letter-spacing: -.25px; }
.clock p { line-height: 32px; }
.bell { width: 28px; height: 32px; margin: 31px 0 0 18px; }

.toast { position: absolute; left: 2312px; top: 1580px; width: 728px; height: 218px; padding: 0 30px; border: 2px solid #3f3f3f; border-radius: 16px; background: #222; box-shadow: 0 8px 24px rgba(0, 0, 0, .35); }
.toast-head { display: flex; align-items: center; height: 88px; padding: 0 13px 0 5px; }
.toast-head span { padding-bottom: 2px; }
.toast-app { width: 22px; height: 22px; margin-right: 21px; }
.toast-more { width: 24px; height: 4px; margin-left: auto; }
.toast-close { width: 19px; height: 19px; margin-left: 58px; color: #d0d0d0; }
.toast p { font-size: 27.5px; line-height: 38px; letter-spacing: -.2px; }
.toast p:nth-child(2) { margin-top: 12px; }
.toast p.dim { letter-spacing: -.5px; }
```
